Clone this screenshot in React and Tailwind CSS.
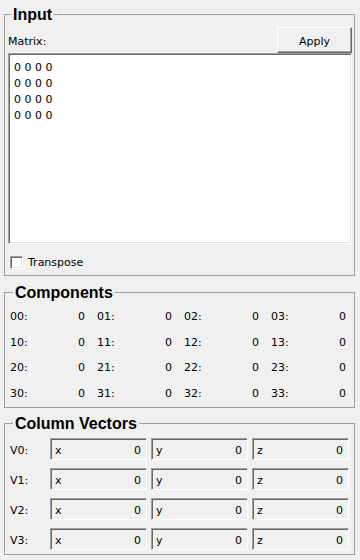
import React from "react";

const rows = [0, 1, 2, 3];

function Legend({ children }) {
  return (
    <legend className="ml-[3px] px-[2px] font-['Liberation_Sans',Arial,sans-serif] font-bold text-[16px] leading-[29px] text-black">
      {children}
    </legend>
  );
}

function Field({ name, value }) {
  return (
    <div className="h-[22px] flex items-center justify-between pt-[2px] pl-[4px] pr-[5px] border border-t-[#a0a0a0] border-l-[#a0a0a0] border-b-white border-r-white shadow-[inset_1px_1px_0_#696969] leading-[13px]">
      <span>{name}</span>
      <span>{value}</span>
    </div>
  );
}

export default function App() {
  return (
    <div className="w-[360px] h-[560px] overflow-hidden bg-[#f0f0f0] pl-[4px] font-['DejaVu_Sans',sans-serif] text-[11px] text-black">
      {/* Input */}
      <fieldset className="w-[351px] h-[276px] border border-[#a0a0a0] pl-[3px] pr-[2px]">
        <Legend>Input</Legend>
        <div className="-mt-[2px] h-[26px] flex items-end justify-between">
          <span className="mb-[5px] leading-[13px]">Matrix:</span>
          <button className="w-[75px] h-[26px] pt-[2px] leading-[13px] bg-[#f0f0f0] border border-t-white border-l-white border-b-[#696969] border-r-[#696969] shadow-[inset_-1px_-1px_0_#a0a0a0]">
            Apply
          </button>
        </div>
        <div className="h-[191px] bg-white pt-[6px] pl-[5px] leading-[16px] border border-t-[#a0a0a0] border-l-[#a0a0a0] border-b-white border-r-white shadow-[inset_1px_1px_0_#696969,inset_-1px_-1px_0_#e3e3e3] whitespace-pre">
          {rows.map((r) => (
            <div key={r}>0 0 0 0</div>
          ))}
        </div>
        <div className="mt-[12px] ml-[2px] flex items-center gap-[5px]">
          <div className="w-[13px] h-[13px] bg-white border border-t-[#a0a0a0] border-l-[#a0a0a0] border-b-white border-r-white shadow-[inset_1px_1px_0_#696969,inset_-1px_-1px_0_#e3e3e3]" />
          <span className="leading-[13px]">Transpose</span>
        </div>
      </fieldset>

      {/* Components */}
      <fieldset className="mt-[2px] w-[351px] h-[130px] border border-[#a0a0a0] pl-[5px]">
        <Legend>Components</Legend>
        <div className="-mt-[3px] flex flex-col">
          {rows.map((r) => (
            <div key={r} className="h-[25.7px] leading-[25.7px] flex gap-[12px]">
              {rows.map((c) => (
                <div key={c} className="w-[75px] flex justify-between">
                  <span>{`${r}${c}:`}</span>
                  <span>0</span>
                </div>
              ))}
            </div>
          ))}
        </div>
      </fieldset>

      {/* Column Vectors */}
      <fieldset className="mt-[1px] w-[351px] h-[146px] border border-[#a0a0a0] pl-[5px]">
        <Legend>Column Vectors</Legend>
        <div className="flex flex-col gap-[8px]">
          {rows.map((r) => (
            <div key={r} className="h-[22px] flex items-center">
              <span className="w-[40px] pt-[2px] leading-[13px]">{`V${r}:`}</span>
              <div className="w-[299px] grid grid-cols-3 gap-[4px]">
                <Field name="x" value="0" />
                <Field name="y" value="0" />
                <Field name="z" value="0" />
              </div>
            </div>
          ))}
        </div>
      </fieldset>
    </div>
  );
}
